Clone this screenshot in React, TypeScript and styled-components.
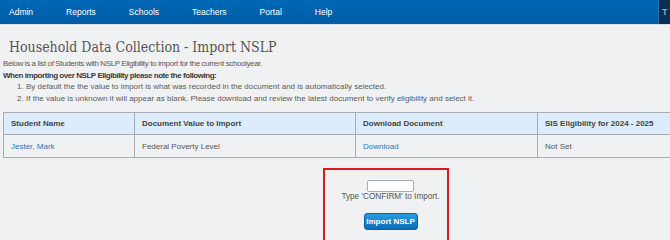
import React from 'react';
import styled, { createGlobalStyle } from 'styled-components';

const GlobalStyle = createGlobalStyle`
  html, body {
    margin: 0;
    padding: 0;
    background: #f0f1f3;
    font-family: 'Liberation Sans', Arial, sans-serif;
    overflow: hidden;
  }
`;

const navItems = ['Admin', 'Reports', 'Schools', 'Teachers', 'Portal', 'Help'];

const columns = [
  { title: 'Student Name', width: 131 },
  { title: 'Document Value to Import', width: 221 },
  { title: 'Download Document', width: 182 },
  { title: 'SIS Eligibility for 2024 - 2025', width: 232 },
];

export default function App() {
  return (
    <>
      <GlobalStyle />
      <Page>
        <NavBar>
          <NavList>
            {navItems.map((item) => (
              <NavItem key={item}>{item}</NavItem>
            ))}
          </NavList>
          <UserMenu>T</UserMenu>
        </NavBar>
        <Content>
          <Title>Household Data Collection - Import NSLP</Title>
          <Intro>
            <Line>Below is a list of Students with NSLP Eligibility to import for the current schoolyear.</Line>
            <Line $bold>When importing over NSLP Eligibility please note the following:</Line>
            <NoteList>
              <li>By default the the value to import is what was recorded in the document and is automatically selected.</li>
              <li>If the value is unknown it will appear as blank. Please download and review the latest document to verify eligibility and select it.</li>
            </NoteList>
          </Intro>
          <Table>
            <colgroup>
              {columns.map((c) => (
                <col key={c.title} style={{ width: c.width }} />
              ))}
            </colgroup>
            <thead>
              <tr>
                {columns.map((c) => (
                  <Th key={c.title}>{c.title}</Th>
                ))}
              </tr>
            </thead>
            <tbody>
              <tr>
                <Td><Link>Jester, Mark</Link></Td>
                <Td>Federal Poverty Level</Td>
                <Td><Link>Download</Link></Td>
                <Td>Not Set</Td>
              </tr>
            </tbody>
          </Table>
          <ConfirmBox>
            <ConfirmInput type="text" />
            <ConfirmText>Type 'CONFIRM' to Import.</ConfirmText>
            <ImportButton>Import NSLP</ImportButton>
          </ConfirmBox>
        </Content>
      </Page>
    </>
  );
}

const Page = styled.div`
  width: 670px;
  height: 240px;
  overflow: hidden;
`;

const NavBar = styled.div`
  display: flex;
  height: 24px;
  background: linear-gradient(#0067b4, #005da6);
  border-bottom: 1px solid #d6dde6;
`;

const NavList = styled.div`
  flex: 1;
  display: flex;
  align-items: center;
  gap: 33px;
  padding-left: 9px;
`;

const NavItem = styled.span`
  color: #ffffff;
  font-size: 8.5px;
`;

const UserMenu = styled.div`
  width: 8px;
  overflow: hidden;
  background: #0b2f52;
  border-left: 1px solid #2a6fb0;
  color: #9aa6b2;
  font-size: 9px;
  font-weight: bold;
  padding-left: 3px;
  display: flex;
  align-items: center;
`;

const Content = styled.div`
  width: 772px;
  display: flex;
  flex-direction: column;
`;

const Title = styled.h1`
  margin: 12px 0 0 9px;
  font-family: 'DejaVu Serif', serif;
  font-stretch: condensed;
  font-weight: normal;
  font-size: 14px;
  line-height: 20px;
  color: #555555;
`;

const Intro = styled.div`
  margin: 1px 0 0 3px;
  color: #5a5a5a;
  font-size: 8px;
  line-height: 11.5px;
`;

const Line = styled.div<{ $bold?: boolean }>`
  letter-spacing: ${(p) => (p.$bold ? '-0.45px' : '-0.38px')};
  font-weight: ${(p) => (p.$bold ? 'bold' : 'normal')};
  color: ${(p) => (p.$bold ? '#3a3a3a' : '#5a5a5a')};
`;

const NoteList = styled.ol`
  margin: 0;
  padding-left: 23px;
`;

const Table = styled.table`
  margin: 8px 3px 0 3px;
  width: 766px;
  border-collapse: collapse;
  table-layout: fixed;
  font-size: 8px;
`;

const Th = styled.th`
  background: #dcecfd;
  border: 1px solid #a9abae;
  height: 21px;
  padding: 0 7px;
  text-align: left;
  color: #444444;
  font-weight: bold;
`;

const Td = styled.td`
  border: 1px solid #a9abae;
  height: 22px;
  padding: 0 7px;
  color: #555555;
`;

const Link = styled.span`
  color: #2f74bb;
`;

const ConfirmBox = styled.div`
  align-self: center;
  margin-top: 10px;
  width: 113px;
  height: 80px;
  border: 2px solid #e0161e;
  display: flex;
  flex-direction: column;
  align-items: center;
  padding: 10px 0 0 9px;
`;

const ConfirmInput = styled.input`
  width: 45px;
  height: 10px;
  padding: 0;
  border: 1px solid #a9abae;
  border-radius: 2px;
  background: #ffffff;
`;

const ConfirmText = styled.div`
  margin-top: 0;
  font-size: 8.2px;
  line-height: 10px;
  color: #555555;
`;

const ImportButton = styled.button`
  margin-top: 11px;
  width: 54px;
  height: 17px;
  padding: 0;
  border: 1px solid #0a63a8;
  border-radius: 3px;
  background: linear-gradient(#2a9be2, #0a6db8);
  color: #ffffff;
  font-family: 'Liberation Sans', Arial, sans-serif;
  font-size: 8px;
  font-weight: bold;
`;
